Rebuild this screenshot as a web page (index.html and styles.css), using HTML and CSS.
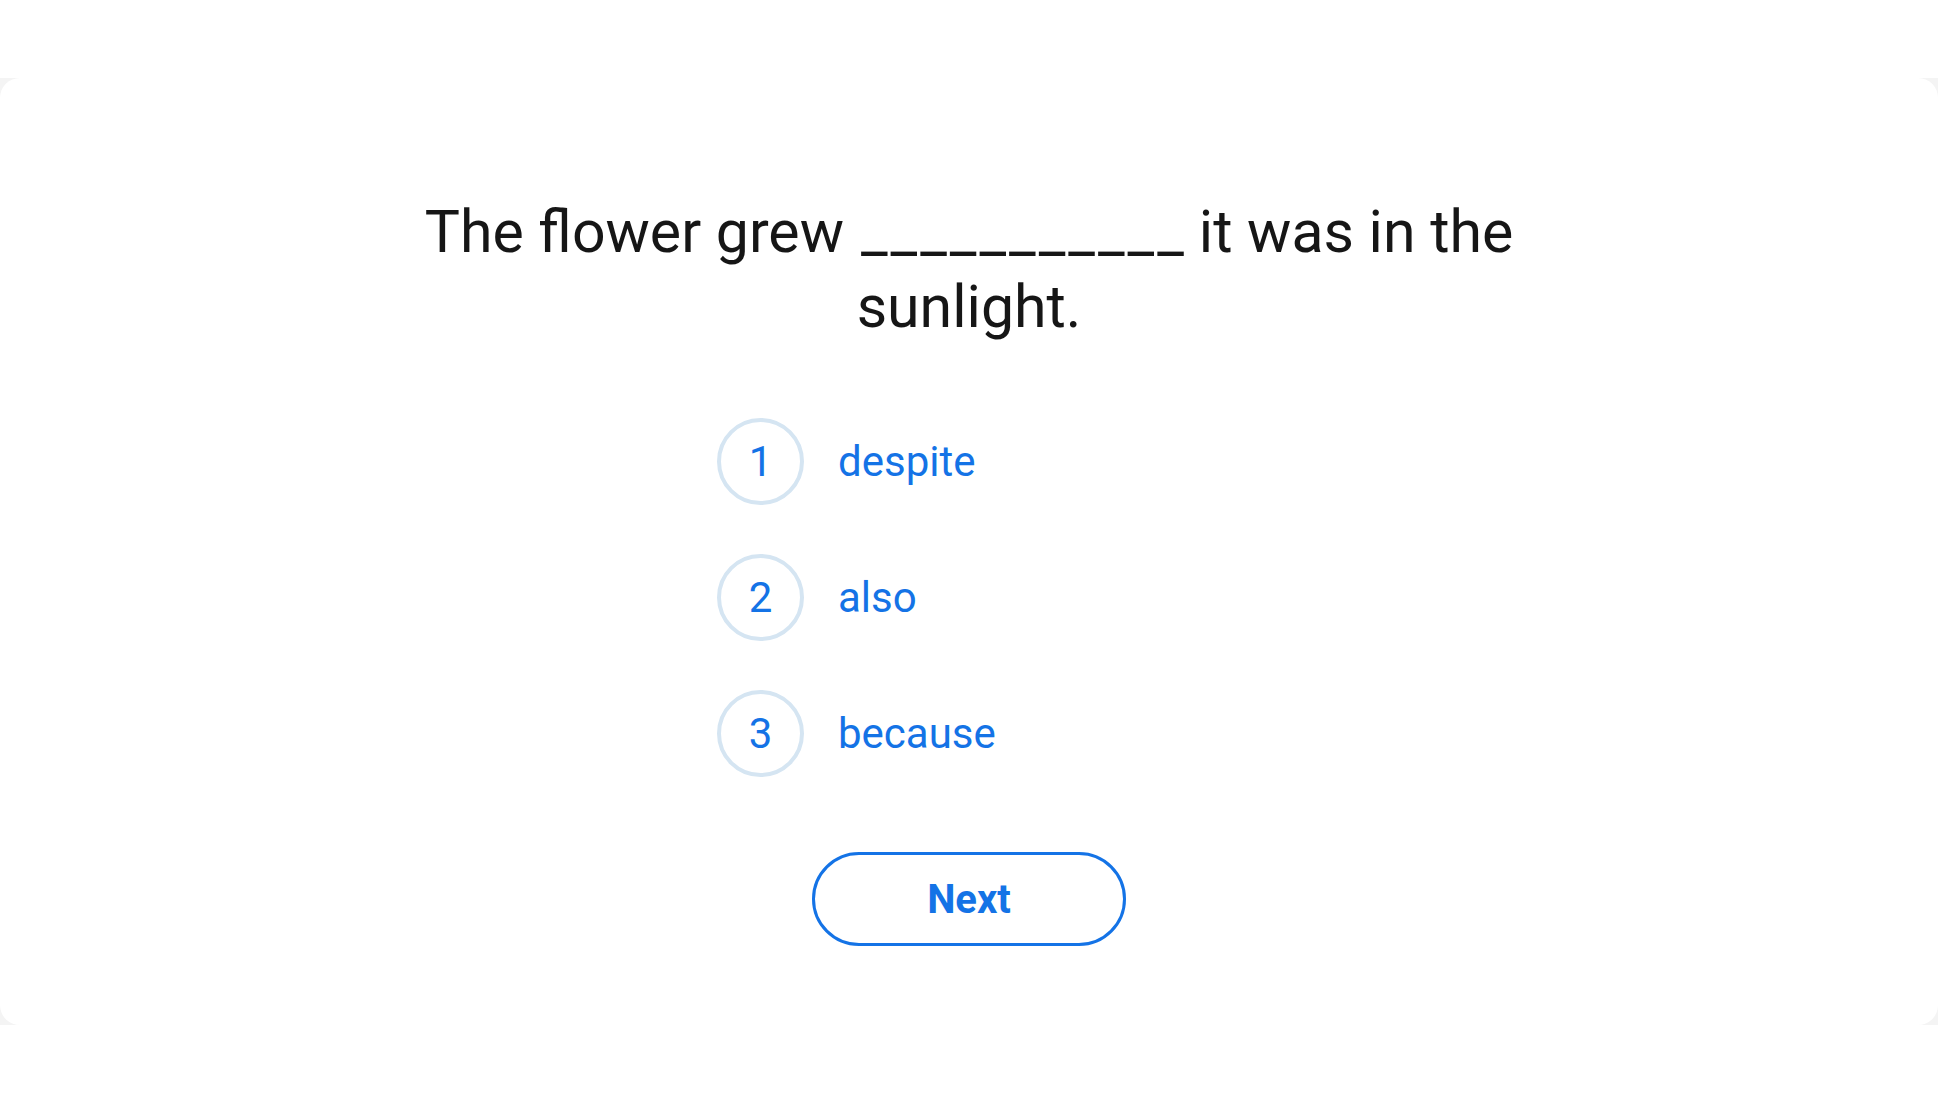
FILE: index.html
```html
<!DOCTYPE html>
<html lang="en">
<head>
    <meta charset="UTF-8">
    <meta name="viewport" content="width=device-width, initial-scale=1.0">
    <title>Fill in the blank</title>
    <link rel="stylesheet" href="styles.css">
</head>
<body>
    <div class="stage">
        <div class="card">
            <h1 class="question">The flower grew<span class="blank">___________</span>it was in the<br>sunlight.</h1>

            <ul class="choices">
                <li class="choice">
                    <span class="choice-num">1</span>
                    <span class="choice-text">despite</span>
                </li>
                <li class="choice">
                    <span class="choice-num">2</span>
                    <span class="choice-text">also</span>
                </li>
                <li class="choice">
                    <span class="choice-num">3</span>
                    <span class="choice-text">because</span>
                </li>
            </ul>

            <button type="button" class="next-btn">Next</button>
        </div>
    </div>
</body>
</html>
```

FILE: styles.css
```css
body {
    margin: 0;
    padding: 0;
    background-color: #fff;
    font-family: Roboto, "Noto Sans", sans-serif;
}

.stage {
    margin-top: 78px;
    background-color: #f4f4f4;
}

.card {
    height: 947px;
    box-sizing: border-box;
    padding-top: 116px;
    background-color: #fff;
    border-radius: 20px;
    display: flex;
    flex-direction: column;
    align-items: center;
}

.question {
    max-width: 1150px;
    margin: 0;
    color: #161616;
    font-size: 59px;
    font-weight: 400;
    line-height: 75px;
    text-align: center;
}

.blank {
    display: inline-block;
    margin: 0 12px 0 17px;
    letter-spacing: 3px;
}

.choices {
    list-style: none;
    width: 504px;
    margin: 74px 0 0;
    padding: 0;
    display: flex;
    flex-direction: column;
    gap: 49px;
}

.choice {
    display: flex;
    align-items: center;
    gap: 34px;
    color: #1473e6;
    cursor: pointer;
}

.choice-num {
    width: 87px;
    height: 87px;
    box-sizing: border-box;
    border: 4px solid #d5e5f2;
    border-radius: 50%;
    display: flex;
    align-items: center;
    justify-content: center;
    font-size: 42px;
}

.choice-text {
    font-size: 42px;
}

.next-btn {
    width: 314px;
    height: 94px;
    margin-top: 75px;
    background-color: #fff;
    border: 3px solid #1473e6;
    border-radius: 47px;
    color: #1473e6;
    font-family: Roboto, Arial, sans-serif;
    font-size: 40px;
    font-weight: 700;
    cursor: pointer;
}
```
